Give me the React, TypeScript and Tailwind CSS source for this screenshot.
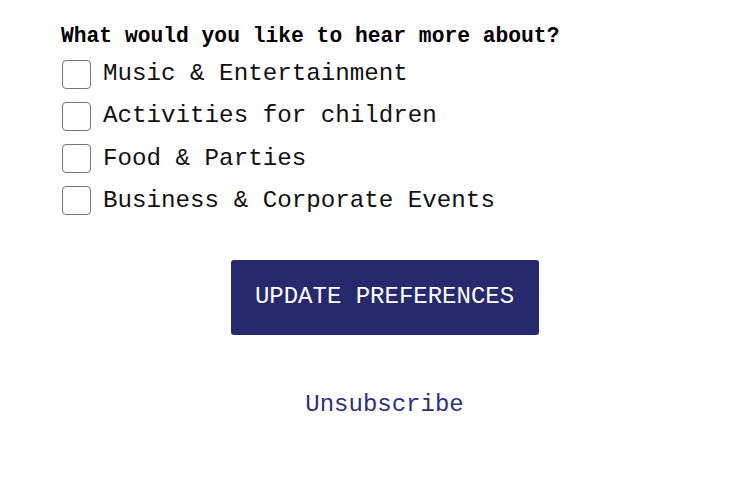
const topics = [
  "Music & Entertainment",
  "Activities for children",
  "Food & Parties",
  "Business & Corporate Events",
];

export default function App() {
  return (
    <div
      className="min-h-[479px] bg-white text-black"
      style={{ fontFamily: '"Liberation Mono", "Courier New", monospace' }}
    >
      <div className="ml-[61px] w-[647px] pt-[22px]">
        <p className="text-[21.3px] font-bold leading-[28px]">
          What would you like to hear more about?
        </p>
        <div className="mt-[9px] flex flex-col gap-[12.33px]">
          {topics.map((topic) => (
            <label key={topic} className="flex h-[30px] items-center gap-[12px]">
              <span className="ml-[1px] h-[29px] w-[29px] shrink-0 rounded-[4px] border border-[#767676] bg-white" />
              <span className="text-[24.2px] leading-[30px] text-[#111]">{topic}</span>
            </label>
          ))}
        </div>
        <div className="mt-[44px] flex justify-center">
          <button
            type="button"
            className="h-[75px] w-[308px] rounded-[3px] bg-[#27296f] text-[24px] text-white"
          >
            UPDATE PREFERENCES
          </button>
        </div>
        <div className="mt-[55px] flex justify-center">
          <a href="#" className="text-[24px] leading-[30px] text-[#2e2e82]">
            Unsubscribe
          </a>
        </div>
      </div>
    </div>
  );
}
